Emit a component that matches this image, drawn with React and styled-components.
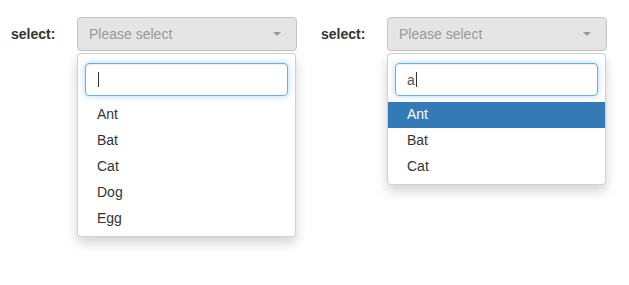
import React from 'react';
import styled, { createGlobalStyle } from 'styled-components';

const GlobalStyle = createGlobalStyle`
  body {
    margin: 0;
    background: #fff;
    font-family: "Liberation Sans", Arial, sans-serif;
    font-size: 14px;
    color: #333;
  }
`;

const Page = styled.div`
  display: flex;
  align-items: flex-start;
  gap: 24px;
  padding: 17px 0 0 11px;
  height: 285px;
  box-sizing: border-box;
`;

const Group = styled.div`
  display: flex;
  align-items: flex-start;
`;

const Label = styled.label`
  width: 45px;
  margin-right: 21px;
  line-height: 34px;
  font-weight: bold;
  font-size: 14px;
  color: #333;
`;

const SelectWrap = styled.div`
  position: relative;
  width: 220px;
`;

const Selection = styled.div`
  display: flex;
  align-items: center;
  justify-content: space-between;
  height: 34px;
  box-sizing: border-box;
  padding: 0 15px 0 11px;
  background: #e5e5e5;
  border: 1px solid #c4c4c4;
  border-radius: 4px;
  color: #999;
`;

const Arrow = styled.span`
  width: 0;
  height: 0;
  border-left: 4px solid transparent;
  border-right: 4px solid transparent;
  border-top: 4px solid #999;
`;

const Dropdown = styled.div`
  position: absolute;
  top: 36px;
  left: 0;
  width: 219px;
  box-sizing: border-box;
  padding: 9px 0 4px;
  background: #fff;
  border: 1px solid rgba(0, 0, 0, 0.18);
  border-radius: 4px;
  box-shadow: 0 6px 12px rgba(0, 0, 0, 0.175);
`;

const Search = styled.div`
  display: flex;
  align-items: center;
  height: 33px;
  box-sizing: border-box;
  margin: 0 7px 6px;
  padding: 0 11px;
  border: 1px solid #66afe9;
  border-radius: 4px;
  box-shadow: inset 0 1px 1px rgba(0, 0, 0, 0.075), 0 0 6px rgba(102, 175, 233, 0.5);
  color: #555;
`;

const Cursor = styled.span`
  display: inline-block;
  width: 1px;
  height: 15px;
  margin-left: 1px;
  background: #333;
`;

const Option = styled.div`
  height: 26px;
  line-height: 25px;
  padding-left: 19px;
  background: ${(p) => (p.$active ? '#337ab7' : 'transparent')};
  color: ${(p) => (p.$active ? '#fff' : '#333')};
`;

const SelectBox = ({ query, options, active }) => (
  <Group>
    <Label>select:</Label>
    <SelectWrap>
      <Selection>
        <span>Please select</span>
        <Arrow />
      </Selection>
      <Dropdown>
        <Search>
          {query}
          <Cursor />
        </Search>
        {options.map((o, i) => (
          <Option key={o} $active={i === active}>
            {o}
          </Option>
        ))}
      </Dropdown>
    </SelectWrap>
  </Group>
);

export default function App() {
  return (
    <>
      <GlobalStyle />
      <Page>
        <SelectBox query="" options={['Ant', 'Bat', 'Cat', 'Dog', 'Egg']} active={-1} />
        <SelectBox query="a" options={['Ant', 'Bat', 'Cat']} active={0} />
      </Page>
    </>
  );
}
